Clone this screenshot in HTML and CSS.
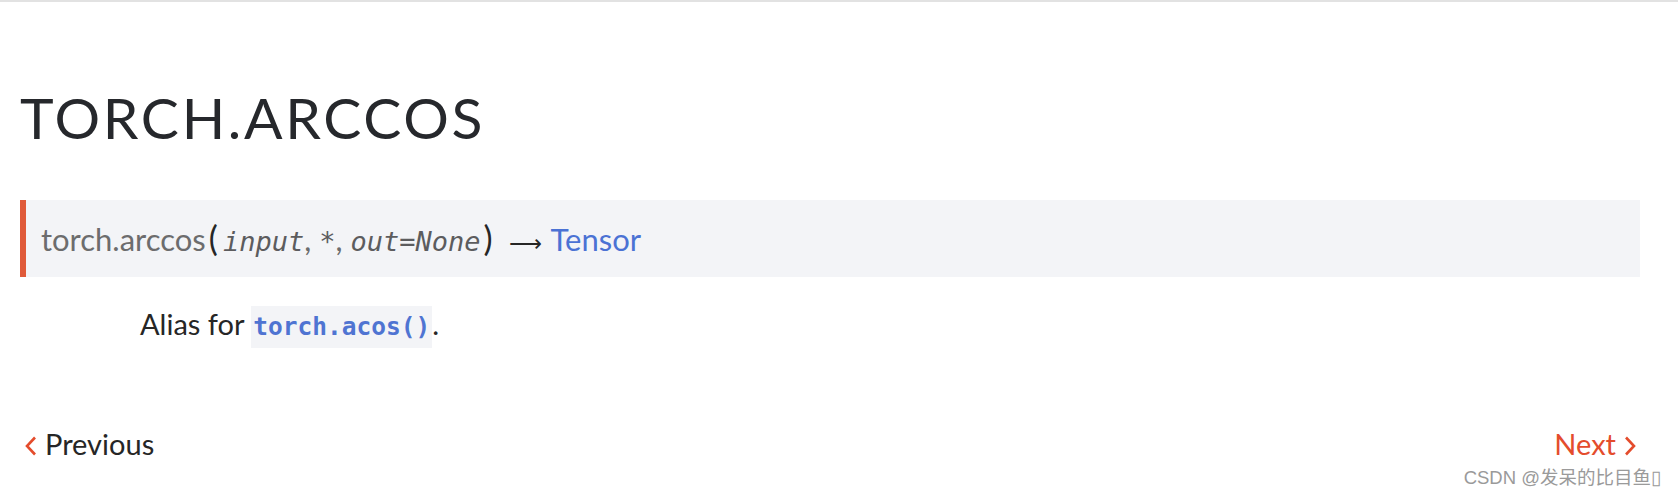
FILE: index.html
```html
<!DOCTYPE html>
<html>
<head>
<meta charset="utf-8">
<link rel="stylesheet" href="styles.css">
</head>
<body>
<div class="page">
  <h1 class="title">torch.arccos</h1>
  <dl class="func">
    <dt class="sig">
      <span class="sig-name">torch.arccos</span><span class="paren">(</span><em class="param">input</em><span class="punct">, </span><em class="param">*</em><span class="punct">, </span><em class="param">out=None</em><span class="paren">)</span><span class="arrow">⟶</span><a class="ret">Tensor</a>
    </dt>
    <dd class="desc">
      <p>Alias for <code class="ref">torch.acos()</code>.</p>
    </dd>
  </dl>
  <div class="nav">
    <a class="nav-link prev">
      <svg class="chev" width="12" height="20" viewBox="0 0 12 20"><polyline points="10,1.5 2,10 10,18.5" fill="none" stroke="#e44c2c" stroke-width="2.6"/></svg>
      <span class="prev-text">Previous</span>
    </a>
    <a class="nav-link next">
      <span class="next-text">Next</span>
      <svg class="chev" width="12" height="20" viewBox="0 0 12 20"><polyline points="2,1.5 10,10 2,18.5" fill="none" stroke="#e44c2c" stroke-width="2.6"/></svg>
    </a>
  </div>
</div>
<div class="watermark">CSDN @发呆的比目鱼▯</div>
</body>
</html>
```
FILE: styles.css
```css
html, body {
  margin: 0;
  padding: 0;
  background: #ffffff;
}
body {
  border-top: 2px solid #e2e2e2;
  font-family: Lato, "Noto Sans", sans-serif;
  color: #262626;
  position: relative;
  height: 494px;
  overflow: hidden;
}
.page {
  padding: 0 38px 0 20px;
  display: flex;
  flex-direction: column;
}
.title {
  margin: 81px 0 0 0;
  font-size: 57px;
  line-height: 68px;
  font-weight: 400;
  text-transform: uppercase;
  letter-spacing: 2.7px;
  color: #26282c;
}
.func {
  margin: 49px 0 0 0;
}
.sig {
  height: 77px;
  background: #f3f4f7;
  border-left: 6px solid #e05a3a;
  padding-left: 15px;
  line-height: 75px;
  font-size: 31px;
  white-space: nowrap;
}
.sig-name {
  color: #6c6c6d;
}
.paren {
  color: #262626;
  font-size: 34px;
  padding: 0 5px 0 3px;
}
.param {
  font-family: "DejaVu Sans Mono", "Liberation Mono", monospace;
  font-style: italic;
  font-size: 27px;
  color: #5c5c5e;
}
.punct {
  color: #6c6c6d;
}
.arrow {
  color: #262626;
  font-size: 23px;
  padding: 0 9px 0 11px;
}
.ret {
  color: #4b72d4;
}
.desc {
  margin: 0 0 0 120px;
}
.desc p {
  margin: 26px 0 0 0;
  font-size: 29px;
  line-height: 42px;
  color: #262626;
}
.ref {
  font-family: "DejaVu Sans Mono", "Liberation Mono", monospace;
  font-weight: bold;
  font-size: 24.5px;
  color: #4f74d2;
  background: #f3f4f7;
  padding: 6px 2px 7px 2px;
}
.nav {
  margin-top: 78px;
  display: flex;
  justify-content: space-between;
  font-size: 29px;
  line-height: 36px;
}
.nav-link {
  display: flex;
  align-items: center;
  gap: 8px;
}
.prev {
  color: #262626;
  margin-left: 5px;
}
.next {
  color: #e44c2c;
  margin-right: 4px;
}
.chev {
  display: block;
  margin-top: 4px;
}
.watermark {
  position: absolute;
  right: 17px;
  bottom: 7px;
  font-family: "Liberation Sans", "Noto Sans CJK SC", sans-serif;
  font-size: 18.5px;
  color: #9a9a9a;
  text-shadow: 0 0 1px #fff;
}
```
